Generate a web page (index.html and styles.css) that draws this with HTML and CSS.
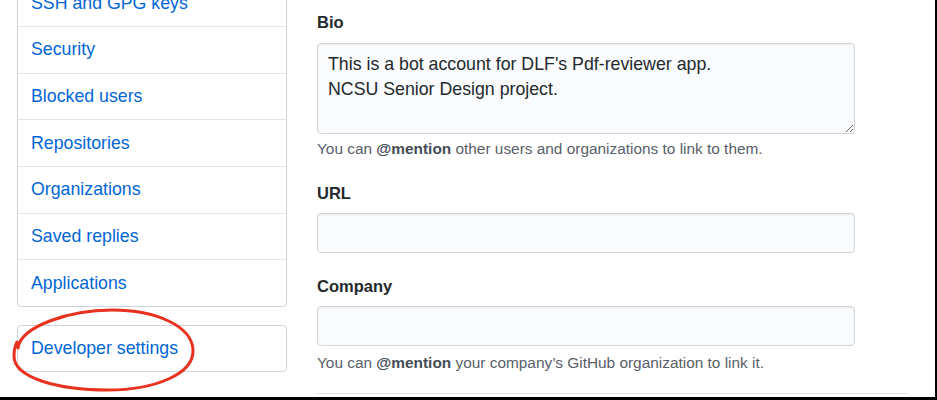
FILE: index.html
```html
<!DOCTYPE html>
<html lang="en">
<head>
<meta charset="utf-8">
<title>Profile settings</title>
<link rel="stylesheet" href="styles.css">
</head>
<body>
<div class="frame">
  <div class="layout">
    <nav class="sidebar">
      <ul class="menu">
        <li><a href="#">SSH and GPG keys</a></li>
        <li><a href="#">Security</a></li>
        <li><a href="#">Blocked users</a></li>
        <li><a href="#">Repositories</a></li>
        <li><a href="#">Organizations</a></li>
        <li><a href="#">Saved replies</a></li>
        <li><a href="#">Applications</a></li>
      </ul>
      <div class="menu dev"><a href="#">Developer settings</a></div>
    </nav>
    <main class="content">
      <div class="group bio">
        <label class="label label-bio" for="bio">Bio</label>
        <textarea id="bio" class="field area" readonly>This is a bot account for DLF's Pdf-reviewer app.
NCSU Senior Design project.</textarea>
        <p class="note">You can <strong>@mention</strong> other users and organizations to link to them.</p>
      </div>
      <div class="group url">
        <label class="label" for="url">URL</label>
        <input id="url" class="field input" type="text">
      </div>
      <div class="group company">
        <label class="label" for="company">Company</label>
        <input id="company" class="field input" type="text">
        <p class="note note-company">You can <strong>@mention</strong> your company’s GitHub organization to link it.</p>
      </div>
      <div class="rule"></div>
    </main>
  </div>
  <svg class="annotation" width="210" height="100" viewBox="0 300 210 100" aria-hidden="true">
    <path d="M 18 348 C 21 326, 70 310, 112 310 C 156 310, 192 326, 193 350 C 194 374, 155 390, 108 390 C 58 390, 14 378, 14 356 C 14 351, 15 346, 17 342" fill="none" stroke="#e8321f" stroke-width="3" stroke-linecap="round" stroke-linejoin="round"/>
  </svg>
</div>
</body>
</html>
```

FILE: styles.css
```css
html, body {
  margin: 0;
  padding: 0;
  background: #fff;
}

.frame {
  position: relative;
  width: 937px;
  height: 400px;
  box-sizing: border-box;
  border-right: 2px solid #000;
  border-bottom: 3px solid #000;
  overflow: hidden;
  font-family: "Liberation Sans", Arial, sans-serif;
  color: #24292e;
}

.layout {
  display: flex;
  gap: 30px;
  padding-left: 17px;
}

.sidebar {
  flex: none;
  width: 270px;
  margin-top: -20.67px;
}

.menu {
  list-style: none;
  margin: 0;
  padding: 0;
  border: 1px solid #d1d5da;
  border-radius: 4px;
  background: #fff;
}

.menu li + li {
  border-top: 1px solid #e1e4e8;
}

.menu a {
  display: block;
  padding: 10.33px 13px;
  font-size: 17.75px;
  line-height: 25px;
  color: #0366d6;
  text-decoration: none;
}

.dev {
  margin-top: 18.3px;
}

.dev a {
  padding: 9.75px 13px;
}

.content {
  flex: none;
  width: 591px;
  padding-top: 9.5px;
}

.group {
  display: flex;
  flex-direction: column;
  align-items: flex-start;
}

.url {
  margin-top: 21.5px;
}

.company {
  margin-top: 20.5px;
}

.label {
  display: block;
  font-weight: bold;
  font-size: 16.5px;
  line-height: 25px;
  color: #24292e;
  margin-bottom: 7.5px;
}

.label-bio {
  margin-bottom: 8.5px;
}

.field {
  display: block;
  box-sizing: border-box;
  width: 538px;
  margin: 0;
  background: #fafbfc;
  border: 1px solid #d1d5da;
  border-radius: 4px;
  box-shadow: inset 0 1px 2px rgba(27, 31, 35, 0.075);
  font-family: "Liberation Sans", Arial, sans-serif;
  color: #24292e;
  outline: none;
}

.area {
  height: 91px;
  padding: 7.5px 10px;
  font-size: 17.75px;
  line-height: 25px;
  resize: vertical;
  overflow: hidden;
}

.input {
  height: 40px;
  padding: 0 10px;
  font-size: 17.5px;
}

.note {
  margin: 5px 0 0;
  font-size: 15.4px;
  line-height: 20px;
  color: #586069;
}

.note strong {
  color: #444d56;
}

.note-company {
  margin-top: 7px;
}

.rule {
  margin-top: 20px;
  height: 0;
  border-top: 1px solid #e1e4e8;
}

.annotation {
  position: absolute;
  left: 0;
  top: 300px;
  pointer-events: none;
}
```
